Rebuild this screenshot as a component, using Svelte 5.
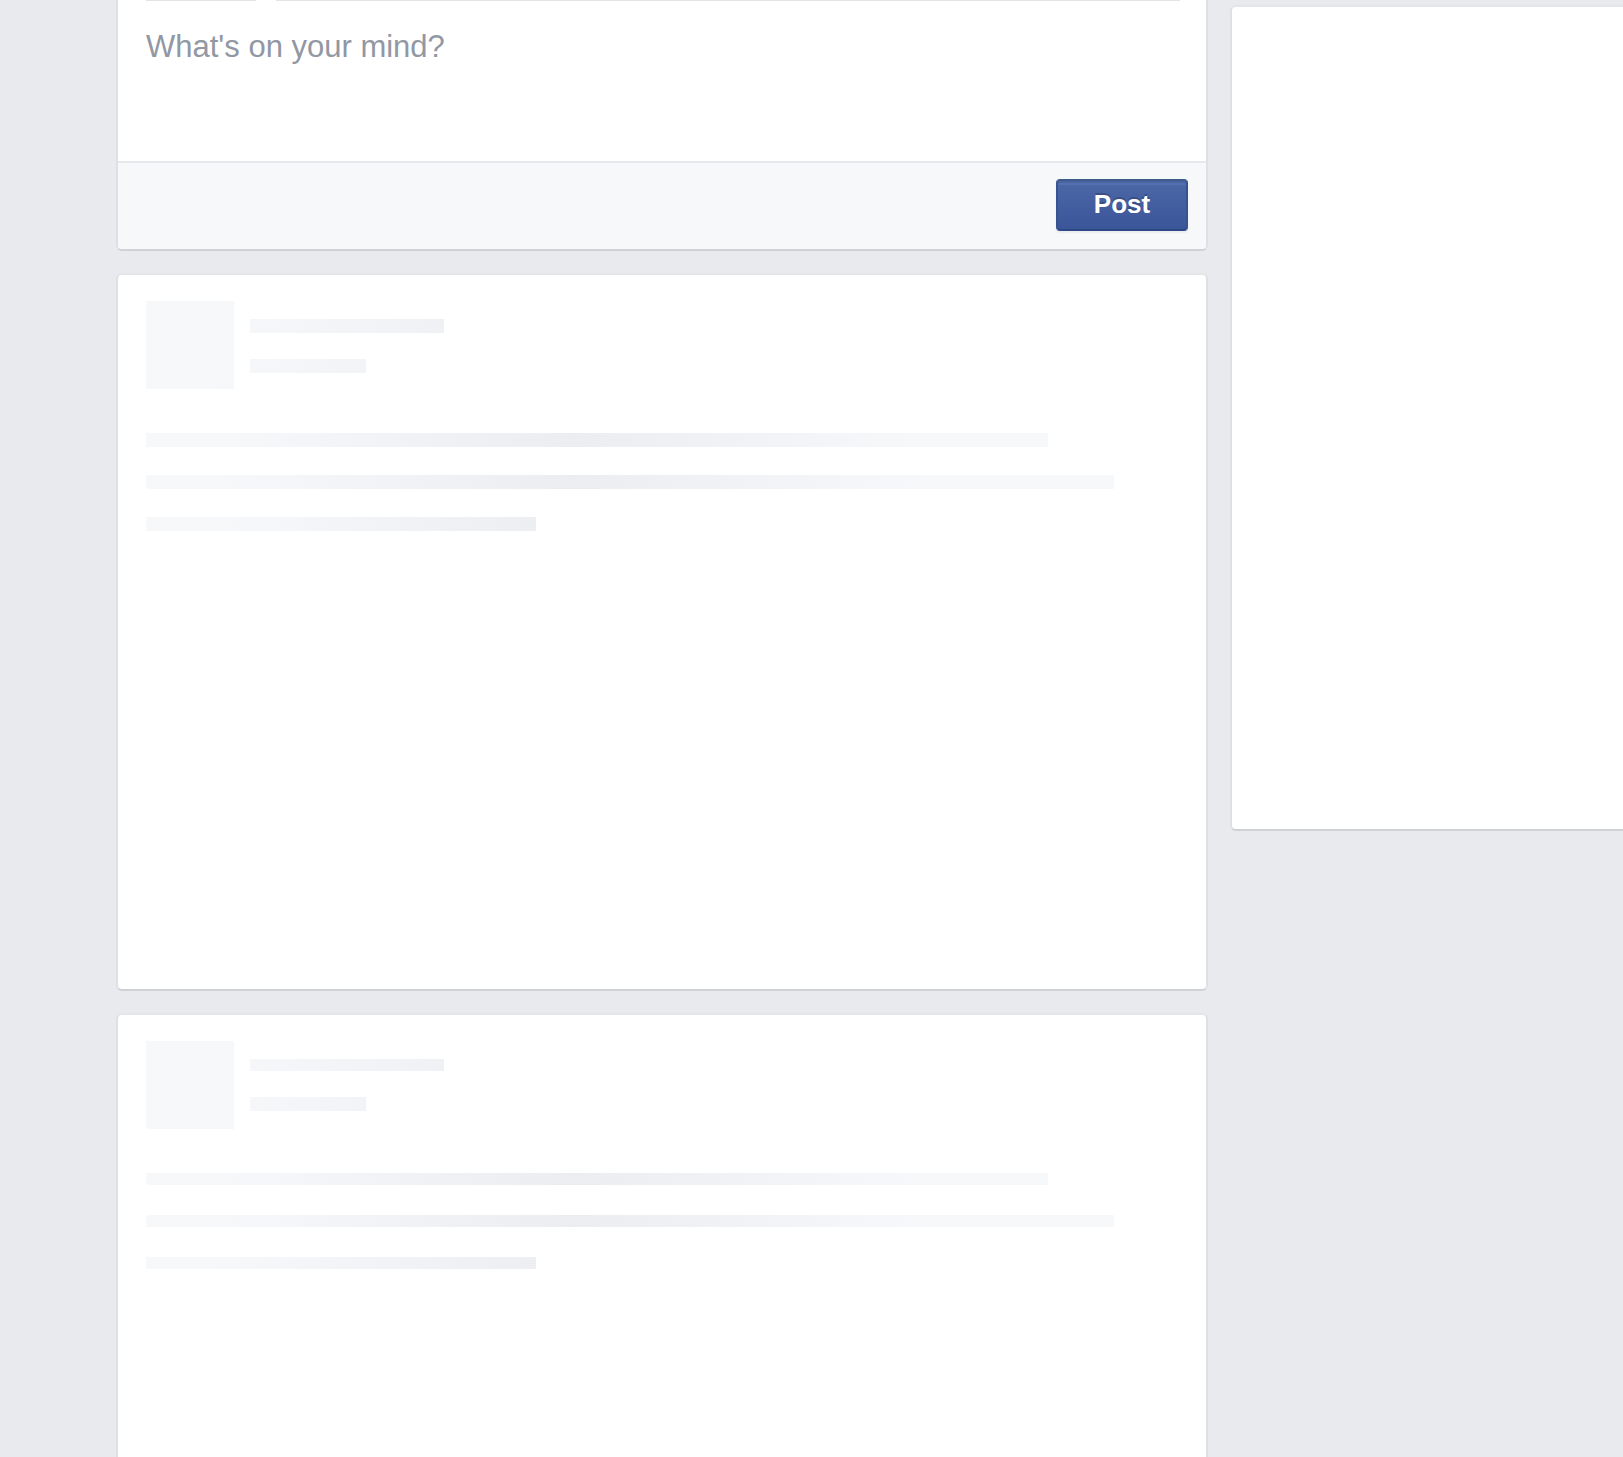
<script>
  const posts = [
    { id: 1, compact: false },
    { id: 2, compact: true },
  ];
  const lines = [87.4, 93.8, 37.8];
</script>

<div class="page">
  <main class="feed">
    <form class="card composer" onsubmit={(e) => e.preventDefault()}>
      <div class="tabs"><span class="tab"></span><span class="rest"></span></div>
      <textarea aria-label="What's on your mind?" placeholder="What's on your mind?"></textarea>
      <footer><button type="submit">Post</button></footer>
    </form>

    {#each posts as post (post.id)}
      <article class="card post" class:compact={post.compact} aria-busy="true">
        <header>
          <div class="avatar shade"></div>
          <div class="meta">
            <div class="bar name shade"></div>
            <div class="bar date shade"></div>
          </div>
        </header>
        <div class="lines">
          {#each lines as width}
            <div class="bar line shade" style:width="{width}%"></div>
          {/each}
        </div>
      </article>
    {/each}
  </main>
  <aside class="card side"></aside>
</div>

<style>
  :global(body) {
    margin: 0;
    background: #e9eaee;
    font-family: "Liberation Sans", Arial, sans-serif;
  }
  .page {
    box-sizing: border-box;
    height: 100vh;
    overflow: hidden;
    padding-left: 116px;
    display: grid;
    grid-template-columns: minmax(0, 1092fr) minmax(0, 393fr);
    column-gap: 22px;
    align-items: start;
  }
  .feed {
    display: flex;
    flex-direction: column;
    gap: 22px;
  }
  .card {
    box-sizing: border-box;
    background: #fff;
    border: 2px solid;
    border-color: #e4e5e9 #dfe0e5 #d0d1d6;
    border-radius: 6px;
  }
  .composer {
    border-top: 0;
    border-radius: 0 0 6px 6px;
  }
  .tabs {
    display: flex;
    gap: 20px;
    padding: 0 26px 0 28px;
    height: 1px;
  }
  .tab {
    width: 110px;
    background: #e4e4e6;
  }
  .rest {
    flex: 1;
    background: #e4e4e6;
  }
  textarea {
    display: block;
    box-sizing: border-box;
    width: 100%;
    height: 160px;
    padding: 28px;
    border: 0;
    outline: 0;
    resize: none;
    background: transparent;
    color: #1d2129;
    font: 31px/36px "Liberation Sans", Arial, sans-serif;
  }
  textarea::placeholder {
    color: #9197a3;
    opacity: 1;
  }
  footer {
    display: flex;
    justify-content: flex-end;
    padding: 16px 18px 18px;
    background: #f6f8fa;
    border-top: 2px solid #e7e8ec;
    border-radius: 0 0 4px 4px;
  }
  button {
    box-sizing: border-box;
    width: 132px;
    height: 52px;
    padding: 0 0 2px;
    border: 2px solid;
    border-color: #3e5a8c #385490 #2e4788;
    border-radius: 4px;
    background: linear-gradient(#4c68a6, #3b5599);
    box-shadow:
      inset 0 2px 0 #4a659f,
      inset 0 4px 0 #5470b3,
      0 2px 2px rgba(0, 0, 0, 0.05);
    color: #fff;
    font: bold 26px/44px "Liberation Sans", Arial, sans-serif;
    text-shadow: 0 -2px 0 rgba(0, 0, 0, 0.2);
  }
  .post {
    height: 718px;
    padding: 26px 28px;
  }
  header {
    display: flex;
    gap: 16px;
  }
  .shade {
    background: linear-gradient(to right, #f6f8fa 70px, #ecedf1 428px, #f6f8fa 775px) no-repeat;
    background-size: 1032px 100%;
  }
  .avatar {
    width: 88px;
    height: 88px;
  }
  .meta {
    padding-top: 18px;
  }
  .bar {
    height: 14px;
  }
  .meta .shade {
    background-position-x: -104px;
  }
  .name {
    width: 194px;
    margin-bottom: 26px;
  }
  .date {
    width: 116px;
  }
  .lines {
    display: flex;
    flex-direction: column;
    gap: 28px;
    padding-top: 44px;
  }
  .compact .name,
  .compact .line {
    height: 12px;
  }
  .compact .lines {
    gap: 30px;
  }
  .side {
    height: 826px;
    margin-top: 5px;
    border-right: 0;
    border-radius: 6px 0 0 6px;
  }
</style>
